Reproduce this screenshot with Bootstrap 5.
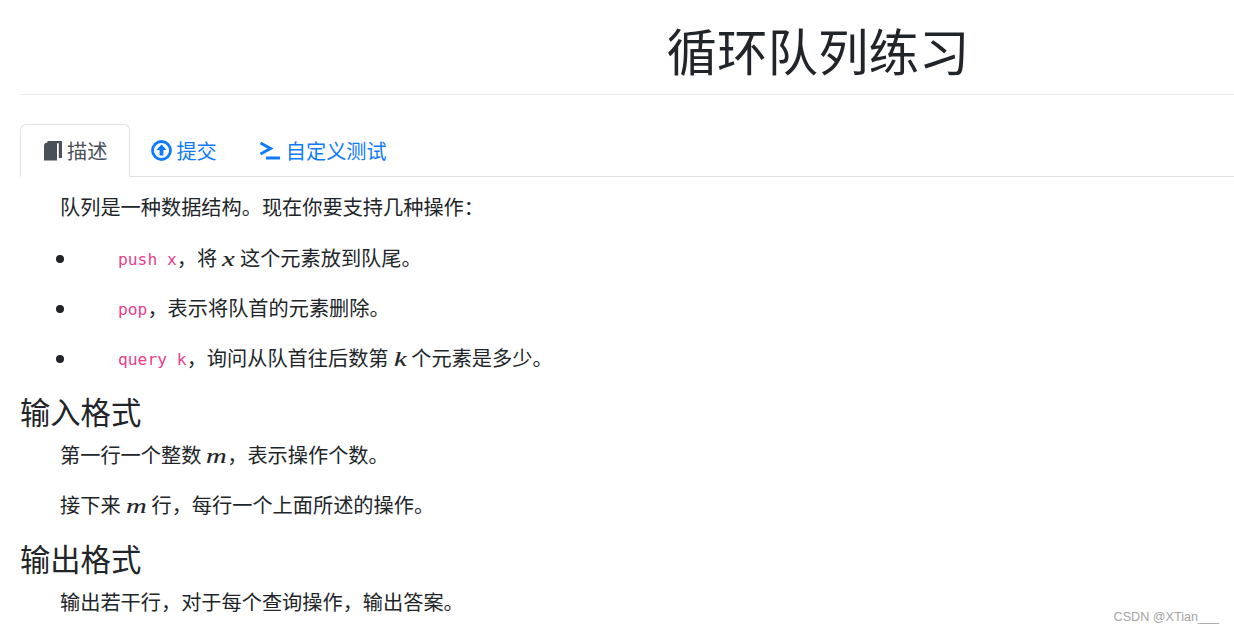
<!DOCTYPE html>
<html lang="zh">
<head>
<meta charset="utf-8">
<title>循环队列练习</title>
<link href="https://cdn.jsdelivr.net/npm/bootstrap@5.3.0/dist/css/bootstrap.min.css" rel="stylesheet">
<style>
html,body{height:632px;overflow:hidden}
body{font-family:"Noto Sans CJK SC","Liberation Sans",sans-serif;font-size:20.2px;line-height:30px;color:#212529;background:#fff}
.page-wrap{padding-left:20px}
.title-head{font-size:50.5px;line-height:60px;font-weight:400;text-align:center;margin:0;padding:19px 0 0 382px;border-bottom:1px solid #e9ecef;height:95px}
.tab-bar{margin-top:29px;border-bottom:1px solid #dee2e6;height:53px;flex-wrap:nowrap}
.tab-bar .nav-link{font-size:20.2px;line-height:30px;padding:11px 21px 11px 20px;color:#0d7bfd;display:flex;align-items:center;height:53px}
.tab-bar .nav-link.active{color:#495057;border-color:#dee2e6 #dee2e6 #fff;padding-right:22px}
.tab-bar .tab-mid{padding-right:20px}
.tab-bar svg{flex:none}
.statement{height:440px;padding-top:15px}
.statement p{text-indent:40px;margin:0 0 20px}
.statement .lead-p{margin-bottom:21px}
.statement h4{font-size:30.3px;line-height:36px;font-weight:400;margin:0 0 11px}
.statement ul{padding-left:58px;margin:0 0 20px}
.statement ul p{margin:0 0 20px}
.statement code{font-family:"DejaVu Sans Mono",monospace;font-size:16.3px;line-height:0;color:#e83e8c;vertical-align:1px}
.mvar{display:inline-block;text-indent:0;font-family:"Liberation Serif",serif;font-style:italic;font-size:22px;line-height:0;margin:0 8px 0 5px;transform:scaleX(1.3);transform-origin:left;-webkit-text-stroke:.15px #212529}
.mvar-m{margin-right:10px}
.mvar-end{margin-right:5px}
.mark-wm{position:absolute;right:15px;bottom:7px;font-family:"Liberation Sans",sans-serif;font-size:12.6px;line-height:16px;color:#a3a3a3}
</style>
</head>
<body>
<div class="page-wrap">
  <h1 class="title-head">循环队列练习</h1>
  <ul class="nav nav-tabs tab-bar">
    <li class="nav-item"><a class="nav-link active" href="#">
      <svg width="26" height="20" viewBox="0 0 26 20"><path fill="#495057" d="M3 5a3.500 3.500 0 0 1 3.500-3.500h9.500v18H3z"/><path fill="#495057" d="M6.500 0H21v17h-3.200V2.200H6.500z"/></svg>描述</a></li>
    <li class="nav-item"><a class="nav-link tab-mid" href="#">
      <svg width="25" height="21" viewBox="0 0 25 21"><circle cx="10.500" cy="10.500" r="9" fill="none" stroke="#0d7bfd" stroke-width="2.800"/><path fill="#0d7bfd" d="M10.500 4.500l5.200 5.500h-3.300v5.500H8.600V10H5.300z"/></svg>提交</a></li>
    <li class="nav-item"><a class="nav-link" href="#">
      <svg width="27" height="20" viewBox="0 0 27 20"><path fill="none" stroke="#0d7bfd" stroke-width="3" d="M1.500 2l10 5.500-10 5.500"/><path fill="#0d7bfd" d="M7 15.500h14v3H7z"/></svg>自定义测试</a></li>
  </ul>
  <div class="statement">
    <p class="lead-p">队列是一种数据结构。现在你要支持几种操作：</p>
    <ul>
      <li><p><code>push x</code>，将<span class="mvar">x</span>这个元素放到队尾。</p></li>
      <li><p><code>pop</code>，表示将队首的元素删除。</p></li>
      <li><p><code>query k</code>，询问从队首往后数第<span class="mvar">k</span>个元素是多少。</p></li>
    </ul>
    <h4>输入格式</h4>
    <p>第一行一个整数<span class="mvar mvar-end">m</span>，表示操作个数。</p>
    <p>接下来<span class="mvar mvar-m">m</span>行，每行一个上面所述的操作。</p>
    <h4>输出格式</h4>
    <p>输出若干行，对于每个查询操作，输出答案。</p>
  </div>
</div>
<div class="mark-wm">CSDN @XTian___</div>
<script src="https://cdn.jsdelivr.net/npm/bootstrap@5.3.0/dist/js/bootstrap.bundle.min.js"></script>
</body>
</html>
